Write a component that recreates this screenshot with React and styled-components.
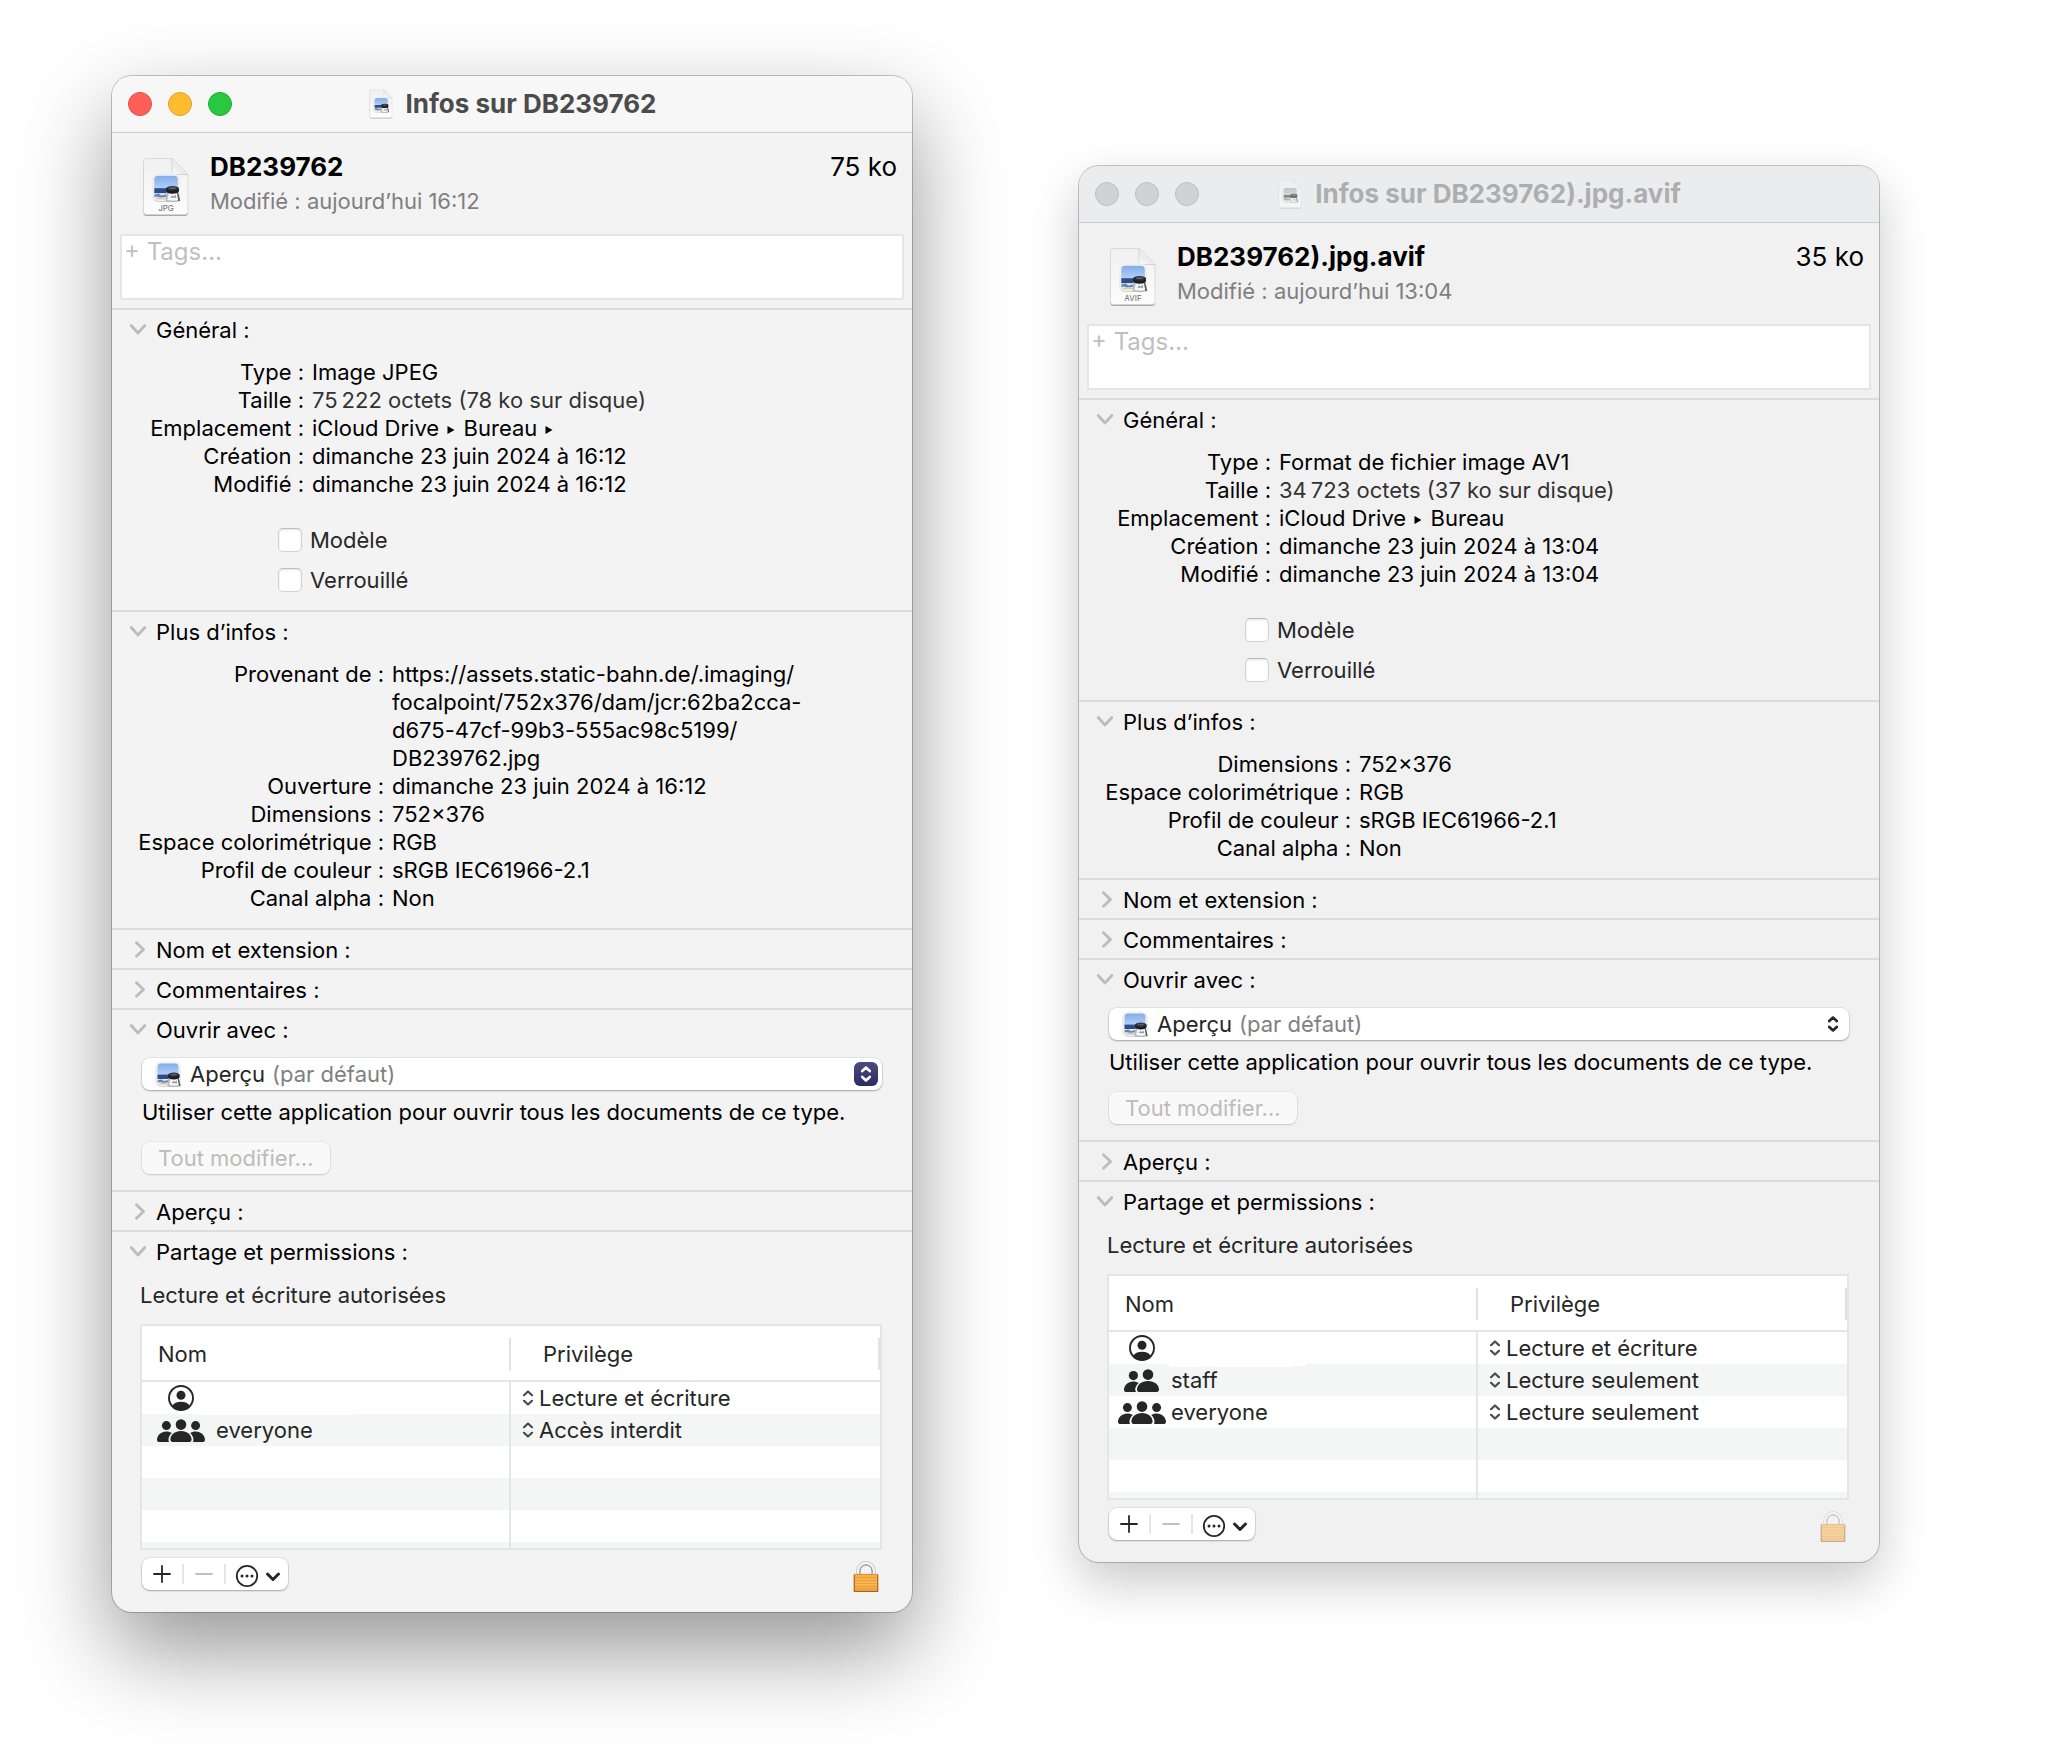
import React from "react";
import { useId, useState } from "react";
import styled, { createGlobalStyle, css } from "styled-components";

const PRIVILEGES = [
  "Lecture et écriture",
  "Lecture seulement",
  "Écriture seulement (boîte de dépôt)",
  "Accès interdit",
];

const files = [
  {
    name: "DB239762",
    kind: "JPG",
    size: "75 ko",
    modified: "aujourd’hui 16:12",
    active: true,
    nameInset: 15,
    masks: [{ left: 56, width: 155, height: 33 }],
    general: [
      { label: "Type", value: "Image JPEG" },
      { label: "Taille", value: "75\u2009222 octets (78 ko sur disque)", soft: true },
      { label: "Emplacement", path: ["iCloud Drive", "Bureau", ""] },
      { label: "Création", value: "dimanche 23 juin 2024 à 16:12" },
      { label: "Modifié", value: "dimanche 23 juin 2024 à 16:12" },
    ],
    more: [
      {
        label: "Provenant de",
        url: true,
        value:
          "https://assets.static-bahn.de/.imaging/\nfocalpoint/752x376/dam/jcr:62ba2cca-\nd675-47cf-99b3-555ac98c5199/\nDB239762.jpg",
      },
      { label: "Ouverture", value: "dimanche 23 juin 2024 à 16:12" },
      { label: "Dimensions", value: "752×376" },
      { label: "Espace colorimétrique", value: "RGB" },
      { label: "Profil de couleur", value: "sRGB IEC61966-2.1" },
      { label: "Canal alpha", value: "Non" },
    ],
    permissions: [
      { who: "user", name: "", privilege: "Lecture et écriture" },
      { who: "everyone", name: "everyone", privilege: "Accès interdit" },
    ],
  },
  {
    name: "DB239762).jpg.avif",
    kind: "AVIF",
    size: "35 ko",
    modified: "aujourd’hui 13:04",
    active: false,
    nameInset: 9,
    masks: [
      { left: 60, width: 124, height: 35 },
      { left: 184, width: 13, height: 34 },
    ],
    general: [
      { label: "Type", value: "Format de fichier image AV1" },
      { label: "Taille", value: "34\u2009723 octets (37 ko sur disque)", soft: true },
      { label: "Emplacement", path: ["iCloud Drive", "Bureau"] },
      { label: "Création", value: "dimanche 23 juin 2024 à 13:04" },
      { label: "Modifié", value: "dimanche 23 juin 2024 à 13:04" },
    ],
    more: [
      { label: "Dimensions", value: "752×376" },
      { label: "Espace colorimétrique", value: "RGB" },
      { label: "Profil de couleur", value: "sRGB IEC61966-2.1" },
      { label: "Canal alpha", value: "Non" },
    ],
    permissions: [
      { who: "user", name: "", privilege: "Lecture et écriture" },
      { who: "group", name: "staff", privilege: "Lecture seulement" },
      { who: "everyone", name: "everyone", privilege: "Lecture seulement" },
    ],
  },
];

/* ---------- drawings ---------- */

// Preview's icon: a beach photo with a loupe standing on it
function PreviewArt({ id }) {
  return (
    <>
      <defs>
        <linearGradient id={`${id}sky`} x1="0" y1="0" x2="0" y2="1">
          <stop offset="0" stopColor="#7fabeb" />
          <stop offset="1" stopColor="#b9d3f6" />
        </linearGradient>
        <clipPath id={`${id}photo`}>
          <rect x="2.5" y="2.5" width="21" height="21" rx="3.5" />
        </clipPath>
      </defs>
      <rect x="0.5" y="1" width="25" height="25" rx="6" fill="#000" opacity="0.16" />
      <rect x="0.5" y="0.5" width="25" height="24.6" rx="6" fill="#f0f0f1" />
      <g clipPath={`url(#${id}photo)`}>
        <rect x="2" y="2" width="22" height="13" fill={`url(#${id}sky)`} />
        <rect x="2" y="13.6" width="22" height="5" fill="#2f4a86" />
        <rect x="2" y="18" width="22" height="7" fill="#e3eaf2" />
        <path d="M2 19.4l4-1 3 1.6 4-.8v2l-5 .8-3-1-3 .8z" fill="#5d88b8" />
        <path d="M4 22.4l5-1 4 1.4v1.6H4z" fill="#e3c39a" />
      </g>
      <path d="M13.500 16.500h10.300l2 8.600q-6 2-13.200 0z" fill="#b4b5b9" />
      <path d="M15.400 18h7.200l1.500 6q-4.800 1.400-10 0z" fill="#f6f6f8" />
      <path d="M16.800 22l1.700-2.200 1.200 1.400 1.700-1.800.8 2.800z" fill="#8d96a8" />
      <path d="M22.800 17.500l1 0 1.700 7.300-1.500.5z" fill="#56575b" />
      <ellipse cx="18.800" cy="16" rx="5.700" ry="2.500" fill="#1c1c20" />
      <rect x="13.100" y="13.800" width="11.400" height="2.200" fill="#1c1c20" />
      <ellipse cx="18.800" cy="13.800" rx="5.700" ry="2.300" fill="#2c2d33" />
      <ellipse cx="18.800" cy="13.600" rx="3.400" ry="1" fill="#5a5c66" />
    </>
  );
}

function PreviewIcon() {
  const id = useId();
  return (
    <svg width="26" height="26" viewBox="0 0 26 26" aria-hidden="true">
      <PreviewArt id={id} />
    </svg>
  );
}

function DocumentIcon({ kind, width, height }) {
  const id = useId();
  return (
    <svg width={width} height={height} viewBox="0 0 48 60" aria-hidden="true">
      <defs>
        <linearGradient id={`${id}paper`} x1="0" y1="0" x2="0" y2="1">
          <stop offset="0" stopColor="#f0f0f0" />
          <stop offset="1" stopColor="#fdfdfd" />
        </linearGradient>
        <linearGradient id={`${id}fold`} x1="0" y1="1" x2="1" y2="0">
          <stop offset="0" stopColor="#ffffff" />
          <stop offset="0.5" stopColor="#cfcfcf" />
        </linearGradient>
      </defs>
      <path
        d="M4.500 2.500h26L46 18v38a3 3 0 0 1-3 3H4.500a3 3 0 0 1-3-3V5.500a3 3 0 0 1 3-3z"
        fill="#000"
        opacity="0.3"
      />
      <path
        d="M4.500 1.500h25.500L46 17.500v37a3 3 0 0 1-3 3H4.500a3 3 0 0 1-3-3v-50a3 3 0 0 1 3-3z"
        fill={`url(#${id}paper)`}
        stroke="#d4d4d4"
        strokeWidth="0.8"
      />
      <path d="M30 1.500L46 17.500H32.500a2.500 2.500 0 0 1-2.500-2.500z" fill="#fff" stroke="#c8c8c8" strokeWidth="0.8" />
      <path d="M30 3L44.500 17.500H32.500a2.500 2.500 0 0 1-2.500-2.500z" fill={`url(#${id}fold)`} opacity="0.5" />
      <g transform={kind ? "translate(9.500 16) scale(1.120)" : "translate(8 15) scale(1.250)"}>
        <PreviewArt id={id} />
      </g>
      {kind && (
        <text x="24" y="54" textAnchor="middle" fontSize="8" fontStyle="normal" fontWeight="400" fill="#6b6b6b">
          {kind}
        </text>
      )}
    </svg>
  );
}

const Disclosure = ({ open }) => (
  <svg width="18" height="18" viewBox="0 0 18 18" fill="none" aria-hidden="true">
    <path
      d={open ? "M2.200 4.500l6.800 7.500L15.800 4.500" : "M7.500 1.700l7 6.800-7 6.800"}
      stroke="#bcbcbc"
      strokeWidth="2.800"
      strokeLinecap="round"
      strokeLinejoin="round"
    />
  </svg>
);

const UpDown = ({ color, weight }) => (
  <svg width="10" height="16" viewBox="0 0 10 16" fill="none" aria-hidden="true">
    <path
      d="M1 5.200L5 1.500l4 3.700M1 10.800l4 3.700 4-3.700"
      stroke={color}
      strokeWidth={weight}
      strokeLinecap="round"
      strokeLinejoin="round"
    />
  </svg>
);

const PathArrow = () => (
  <svg width="12" height="16" viewBox="0 0 12 16" role="img" aria-label="▸">
    <path d="M2.500 6v8l7-4z" fill="#000" />
  </svg>
);

function WhoIcon({ who }) {
  if (who === "user") {
    return (
      <svg width="48" height="28" viewBox="0 0 48 28" aria-hidden="true">
        <circle cx="24" cy="14" r="12" fill="none" stroke="#262626" strokeWidth="1.900" />
        <circle cx="24" cy="11.300" r="4.500" fill="#262626" />
        <path d="M15 22.200c1.500-3 5-4.400 9-4.400s7.500 1.400 9 4.400A12.200 12.200 0 0 1 24 26.200a12.200 12.200 0 0 1-9-4z" fill="#262626" />
      </svg>
    );
  }
  if (who === "group") {
    return (
      <svg width="48" height="28" viewBox="0 0 48 28" fill="#262626" aria-hidden="true">
        <circle cx="15.400" cy="9.600" r="4.600" />
        <path d="M6 23.600c0-4.200 4-8.200 9.400-8.200 2.100 0 3.900.6 5.400 1.600-2.200 1.700-3.400 3.800-3.600 6.600q0 1.800 1 2.400H7.800c-1.200 0-1.800-.8-1.800-2.400z" />
        <circle cx="30" cy="8.600" r="5.300" />
        <path d="M19 23.600c0-4.600 4.600-8.600 11-8.600s11 4 11 8.600c0 1.600-.8 2.400-2.200 2.400H21.200c-1.400 0-2.200-.8-2.200-2.400z" />
      </svg>
    );
  }
  return (
    <svg width="48" height="28" viewBox="0 0 48 28" fill="#262626" aria-hidden="true">
      <circle cx="9.400" cy="9.600" r="4.500" />
      <circle cx="38.600" cy="9.600" r="4.500" />
      <path d="M0 23.600c0-4.200 4-8.200 9.400-8.200 2.200 0 4 .6 5.500 1.600-2 1.700-3.200 3.800-3.400 6.600q0 1.800.6 2.400H1.800C.6 26 0 25.200 0 23.600z" />
      <path d="M48 23.600c0-4.200-4-8.200-9.400-8.200-2.200 0-4 .6-5.500 1.600 2 1.700 3.200 3.800 3.400 6.600q0 1.800-.6 2.400h10.300c1.200 0 1.800-.8 1.800-2.400z" />
      <circle cx="24" cy="8.600" r="5.300" />
      <path d="M13.400 23.600c0-4.600 4.400-8.600 10.600-8.600s10.600 4 10.600 8.600c0 1.600-.8 2.400-2.200 2.400H15.600c-1.400 0-2.200-.8-2.200-2.400z" />
    </svg>
  );
}

const PlusIcon = () => (
  <svg width="18" height="18" viewBox="0 0 18 18" aria-hidden="true">
    <path d="M9 1v16M1 9h16" stroke="#262626" strokeWidth="1.800" strokeLinecap="round" />
  </svg>
);

const MinusIcon = () => (
  <svg width="18" height="18" viewBox="0 0 18 18" aria-hidden="true">
    <path d="M1 9h16" stroke="#c0c0c0" strokeWidth="1.800" strokeLinecap="round" />
  </svg>
);

const ActionsIcon = () => (
  <svg width="46" height="24" viewBox="0 0 46 24" fill="none" aria-hidden="true">
    <circle cx="12" cy="12" r="10.200" stroke="#262626" strokeWidth="1.800" />
    <circle cx="7" cy="12" r="1.500" fill="#262626" />
    <circle cx="12" cy="12" r="1.500" fill="#262626" />
    <circle cx="17" cy="12" r="1.500" fill="#262626" />
    <path d="M32.500 10l5.500 5.500 5.500-5.500" stroke="#262626" strokeWidth="3" strokeLinecap="round" strokeLinejoin="round" />
  </svg>
);

function LockIcon() {
  const id = useId();
  return (
    <svg width="26" height="34" viewBox="0 0 26 34" aria-hidden="true">
      <defs>
        <linearGradient id={id} x1="0" y1="0" x2="0" y2="1">
          <stop offset="0" stopColor="#f6b04a" />
          <stop offset="0.600" stopColor="#f9b550" />
          <stop offset="1" stopColor="#ea9f3a" />
        </linearGradient>
      </defs>
      <path d="M5 16v-4a8 8 0 0 1 16 0v4" fill="none" stroke="#bcc5cd" strokeWidth="3.800" />
      <path d="M5 16v-4a8 8 0 0 1 16 0v4" fill="none" stroke="#f1f5f8" strokeWidth="2.400" />
      <path d="M7 15v-3a6 6 0 0 1 12 0v3" fill="none" stroke="#76828c" strokeWidth="0.900" />
      <rect x="0.800" y="15" width="24.400" height="18" rx="1" fill={`url(#${id})`} />
      <path d="M1 18.500h24M1 21.500h24M1 24.500h24M1 27.500h24M1 30h24" stroke="#e79b38" strokeWidth="0.700" />
      <path d="M1.300 15.500v17h23.400v-17" fill="none" stroke="#a8602a" strokeWidth="1.100" />
      <path d="M1 15.400h24" stroke="#d98a2a" strokeWidth="0.900" />
    </svg>
  );
}

/* ---------- parts ---------- */

function Section({ title, defaultOpen = true, children }) {
  const [open, setOpen] = useState(defaultOpen);
  return (
    <SectionBox>
      <SectionToggle type="button" aria-expanded={open} onClick={() => setOpen(!open)}>
        <Disclosure open={open} />
        {title}&nbsp;:
      </SectionToggle>
      {open && children}
    </SectionBox>
  );
}

function InfoList({ rows, wide }) {
  return (
    <Infos $wide={wide}>
      {rows.map((row) => (
        <React.Fragment key={row.label}>
          <dt>{row.label}&nbsp;:</dt>
          <InfoValue $soft={row.soft} $url={row.url}>
            {row.path
              ? row.path.map((part, i) => (
                  <React.Fragment key={part}>
                    {i > 0 && (
                      <>
                        {" "}
                        <PathArrow />{" "}
                      </>
                    )}
                    {part}
                  </React.Fragment>
                ))
              : row.value}
          </InfoValue>
        </React.Fragment>
      ))}
    </Infos>
  );
}

function Permissions({ file }) {
  const fillers = Array.from({ length: 5 - file.permissions.length });
  return (
    <TableFrame>
      <Table>
        <thead>
          <tr>
            <th>Nom</th>
            <th>Privilège</th>
          </tr>
        </thead>
        <tbody>
          {file.permissions.map((p) => (
            <tr key={p.who}>
              <td>
                <NameCell $inset={file.nameInset}>
                  <WhoIcon who={p.who} />
                  {p.name}
                  {!p.name &&
                    file.masks.map((m) => (
                      <NameMask key={m.left} $left={m.left} $width={m.width} $height={m.height} />
                    ))}
                </NameCell>
              </td>
              <td>
                <PrivilegeCell>
                  <UpDown color="#4a4a4a" weight="2.200" />
                  <PrivilegeSelect aria-label={`Privilège ${p.name}`} defaultValue={p.privilege}>
                    {PRIVILEGES.map((label) => (
                      <option key={label}>{label}</option>
                    ))}
                  </PrivilegeSelect>
                </PrivilegeCell>
              </td>
            </tr>
          ))}
          {fillers.map((_, i) => (
            <tr key={i}>
              <td />
              <td />
            </tr>
          ))}
          <CutRow>
            <td />
            <td />
          </CutRow>
        </tbody>
      </Table>
    </TableFrame>
  );
}

function InfoWindow({ file }) {
  const { active } = file;
  return (
    <Window $active={active}>
      <TitleBar $active={active}>
        <Lights>
          <Light type="button" aria-label="Fermer" $color={active && "#ff5f57"} $edge={active && "#e24b41"} />
          <Light type="button" aria-label="Réduire" $color={active && "#febc2e"} $edge={active && "#e0a028"} />
          <Light type="button" aria-label="Agrandir" $color={active && "#28c840"} $edge={active && "#1dad2c"} />
        </Lights>
        <Title $active={active}>
          <DocumentIcon width={26} height={30} />
          Infos sur {file.name}
        </Title>
      </TitleBar>

      <Summary>
        <DocumentIcon kind={file.kind} width={48} height={60} />
        <div>
          <FileName>{file.name}</FileName>
          <Modified>Modifié&nbsp;: {file.modified}</Modified>
        </div>
        <FileSize>{file.size}</FileSize>
      </Summary>
      <Tags aria-label="Tags" placeholder="+ Tags…" />

      <Section title="Général">
        <InfoList rows={file.general} />
        <Checks>
          <label>
            <input type="checkbox" />
            Modèle
          </label>
          <label>
            <input type="checkbox" />
            Verrouillé
          </label>
        </Checks>
      </Section>

      <Section title="Plus d’infos">
        <InfoList rows={file.more} wide />
      </Section>
      <Section title="Nom et extension" defaultOpen={false} />
      <Section title="Commentaires" defaultOpen={false} />

      <Section title="Ouvrir avec">
        <OpenWith>
          <AppPicker>
            <select aria-label="Ouvrir avec" defaultValue="Aperçu">
              <option>Aperçu</option>
              <option>Photos</option>
            </select>
            <AppHint>
              <PreviewIcon />
              <span>(par défaut)</span>
              <Stepper $active={active}>
                <UpDown color={active ? "#fff" : "#262626"} weight="2.600" />
              </Stepper>
            </AppHint>
          </AppPicker>
          <p>Utiliser cette application pour ouvrir tous les documents de ce type.</p>
          <ChangeAll type="button" disabled>
            Tout modifier…
          </ChangeAll>
        </OpenWith>
      </Section>
      <Section title="Aperçu" defaultOpen={false} />

      <Section title="Partage et permissions">
        <Sharing>
          <p>Lecture et écriture autorisées</p>
          <Permissions file={file} />
          <Footer>
            <ButtonGroup>
              <button type="button" aria-label="Ajouter">
                <PlusIcon />
              </button>
              <button type="button" aria-label="Supprimer" disabled>
                <MinusIcon />
              </button>
              <button type="button" aria-label="Actions">
                <ActionsIcon />
              </button>
            </ButtonGroup>
            <LockButton type="button" aria-label="Verrou" $active={active}>
              <LockIcon />
            </LockButton>
          </Footer>
        </Sharing>
      </Section>
    </Window>
  );
}

function App() {
  return (
    <>
      <GlobalStyle />
      <Desktop>
        {files.map((file) => (
          <InfoWindow key={file.name} file={file} />
        ))}
      </Desktop>
    </>
  );
}

/* ---------- styles ---------- */

const GlobalStyle = createGlobalStyle`
  * {
    box-sizing: border-box;
  }

  body {
    margin: 0;
    background: #fff;
    color: #000;
    font-family: Inter, "Liberation Sans", sans-serif;
    font-size: 22px;
    line-height: 28px;
  }

  button, select, textarea {
    font: inherit;
    color: inherit;
    border: none;
    background: none;
    margin: 0;
    padding: 0;
  }

  svg {
    display: block;
    flex: none;
  }

  p, h1, h2, dl, dd {
    margin: 0;
  }
`;

const Desktop = styled.main`
  display: grid;
  grid-template-columns: 1fr 1fr;
  align-items: start;
  gap: 167px;
  padding: 76px 169px 148px 112px;
  min-height: 100vh;
`;

const Window = styled.article`
  border-radius: 20px;
  background: ${({ $active }) => ($active ? "#f3f3f3" : "#f1f1f1")};
  box-shadow: 0 0 0 1px rgba(0, 0, 0, 0.22),
    ${({ $active }) =>
      $active ? "0 38px 90px rgba(0, 0, 0, 0.42)" : "0 20px 50px rgba(0, 0, 0, 0.22)"};

  & + & {
    margin-top: 90px;
  }
`;

const TitleBar = styled.header`
  display: grid;
  grid-template-columns: 1fr auto 1fr;
  align-items: center;
  height: 57px;
  padding: 0 16px;
  border-bottom: 1px solid #cccccc;
  border-radius: 20px 20px 0 0;
  background: ${({ $active }) => ($active ? "#f7f7f7" : "#ebecee")};
`;

const Lights = styled.div`
  display: flex;
  gap: 16px;
`;

const Light = styled.button`
  width: 24px;
  height: 24px;
  border-radius: 50%;
  border: 1px solid ${({ $edge }) => $edge || "#bcbdbf"};
  background: ${({ $color }) => $color || "#d1d2d4"};
`;

const Title = styled.h1`
  display: flex;
  align-items: center;
  gap: 12px;
  font-size: 26px;
  line-height: 32px;
  font-weight: 700;
  color: ${({ $active }) => ($active ? "#4b4b4b" : "#adaeb0")};

  ${({ $active }) =>
    !$active &&
    css`
      svg {
        filter: grayscale(1);
        opacity: 0.6;
      }
    `}
`;

const Summary = styled.div`
  display: grid;
  grid-template-columns: auto 1fr auto;
  gap: 20px;
  padding: 16px 15px 17px 30px;

  svg {
    margin-top: 8px;
  }
`;

const FileName = styled.h2`
  font-size: 26px;
  line-height: 36px;
  font-weight: 700;
`;

const Modified = styled.p`
  line-height: 32px;
  color: #7f7f7f;
`;

const FileSize = styled.p`
  font-size: 26px;
  line-height: 36px;
`;

const Tags = styled.textarea`
  display: block;
  width: calc(100% - 16px);
  height: 66px;
  margin: 0 8px 8px;
  padding: 2px;
  border: 2px solid #e5e5e5;
  background: #fff;
  font-size: 24px;
  resize: none;
  outline: none;

  &::placeholder {
    color: #bfbfbf;
    opacity: 1;
  }
`;

const SectionBox = styled.section`
  border-top: 2px solid #dcdcdc;
`;

const SectionToggle = styled.button`
  display: flex;
  align-items: center;
  gap: 9px;
  width: 100%;
  height: 38px;
  padding: 2px 17px 0;
`;

const Infos = styled.dl`
  display: grid;
  grid-template-columns: ${({ $wide }) => ($wide ? 272 : 192)}px 1fr;
  column-gap: 8px;
  padding: 10px 16px 16px 0;

  dt {
    text-align: right;
  }
`;

const InfoValue = styled.dd`
  white-space: pre-line;
  color: ${({ $soft }) => ($soft ? "#333" : "#000")};
  /* keeps the letter x between digits in addresses */
  font-variant-ligatures: ${({ $url }) => ($url ? "no-contextual" : "normal")};

  svg {
    display: inline-block;
  }
`;

const Checks = styled.div`
  display: grid;
  justify-items: start;
  gap: 12px;
  padding: 12px 0 16px 166px;
  color: #262626;

  label {
    display: flex;
    align-items: center;
    gap: 8px;
  }

  input {
    appearance: none;
    width: 24px;
    height: 24px;
    margin: 0;
    border: 1px solid #d2d2d2;
    border-top-color: #bdbdbd;
    border-radius: 5px;
    background: #fff;
    box-shadow: inset 0 1px 2px rgba(0, 0, 0, 0.12);
  }

  input:checked {
    background: #34346e;
  }
`;

const OpenWith = styled.div`
  display: grid;
  gap: 8px;
  padding: 10px 30px 16px;

  p {
    margin-bottom: 8px;
  }
`;

const raised = css`
  border-radius: 8px;
  background: #fff;
  box-shadow: 0 0 0 1px rgba(0, 0, 0, 0.06), 0 1px 2px rgba(0, 0, 0, 0.28);
`;

const AppPicker = styled.div`
  display: grid;
  height: 32px;
  ${raised}

  select {
    grid-area: 1 / 1;
    appearance: none;
    padding-left: 48px;
    border-radius: 8px;
    color: #262626;
  }
`;

const AppHint = styled.div`
  grid-area: 1 / 1;
  display: flex;
  align-items: center;
  padding: 0 4px 0 13px;
  pointer-events: none;
  color: #808080;

  span {
    flex: 1;
    padding-left: 91px;
  }
`;

const Stepper = styled.i`
  display: grid;
  place-items: center;
  width: 24px;
  height: 24px;
  border-radius: 6px;
  background: ${({ $active }) => ($active ? "linear-gradient(#4c4c80, #2b2b63)" : "none")};
`;

const ChangeAll = styled.button`
  justify-self: start;
  height: 32px;
  padding: 0 16px;
  ${raised}
  background: #f9f9f9;
  box-shadow: 0 0 0 1px rgba(0, 0, 0, 0.04), 0 1px 2px rgba(0, 0, 0, 0.14);
  color: #bcbcbc;
`;

const Sharing = styled.div`
  padding: 10px 30px 22px 28px;

  p {
    color: #262626;
    line-height: 30px;
  }
`;

const TableFrame = styled.div`
  margin: 14px 0 8px;
  border: 2px solid #e5e5e5;
  background: #fff;
`;

const Table = styled.table`
  width: 100%;
  table-layout: fixed;
  border-collapse: separate;
  border-spacing: 0;
  color: #262626;

  th {
    position: relative;
    height: 56px;
    padding: 2px 16px 0;
    border-bottom: 2px solid #e5e5e5;
    font-weight: 400;
    text-align: left;
  }

  th + th {
    padding-left: 32px;
  }

  th::after {
    content: "";
    position: absolute;
    top: 12px;
    right: 0;
    width: 2px;
    height: 32px;
    background: #e2e2e2;
  }

  td {
    height: 32px;
    padding: 0;
  }

  td:first-child {
    border-right: 2px solid #e5e5e5;
  }

  tbody tr:nth-child(even) {
    background: #f4f5f5;
  }
`;

const CutRow = styled.tr`
  td {
    height: 6px;
  }
`;

const NameCell = styled.div`
  position: relative;
  display: flex;
  align-items: center;
  gap: ${({ $inset }) => $inset - 4}px;
  height: 32px;
  padding-left: ${({ $inset }) => $inset}px;
`;

// blanked-out account name, spills a little over the row below
const NameMask = styled.span`
  position: absolute;
  top: 0;
  left: ${({ $left }) => $left}px;
  width: ${({ $width }) => $width}px;
  height: ${({ $height }) => $height}px;
  background: #fff;
`;

const PrivilegeCell = styled.div`
  display: flex;
  align-items: center;
  gap: 6px;
  height: 32px;
  padding-left: 12px;
`;

const PrivilegeSelect = styled.select`
  appearance: none;
  flex: 1;
  min-width: 0;
  height: 32px;
`;

const Footer = styled.div`
  display: flex;
  justify-content: space-between;
  align-items: center;
  height: 32px;
  padding: 0 3px 0 2px;
`;

const ButtonGroup = styled.div`
  display: flex;
  align-items: center;
  height: 32px;
  ${raised}

  button {
    display: grid;
    place-items: center;
    height: 20px;
    padding: 0 11px;
  }

  button + button {
    border-left: 2px solid #e5e5e5;
  }

  button:last-child {
    padding: 0 7px 0 9px;
  }
`;

const LockButton = styled.button`
  margin-top: 4px;
  opacity: ${({ $active }) => ($active ? 1 : 0.5)};
`;

export default App;
